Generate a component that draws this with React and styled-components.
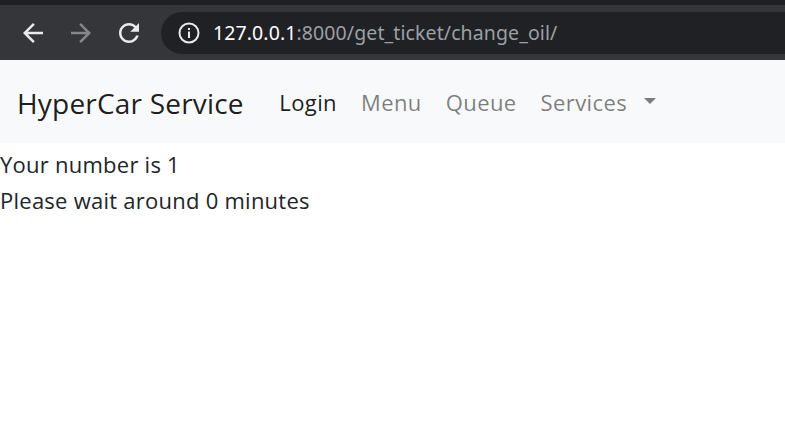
import React from "react";
import styled, { createGlobalStyle } from "styled-components";

const Global = createGlobalStyle`
  html, body { margin: 0; padding: 0; background: #fff; }
  body { font-family: "Open Sans", "Noto Sans", sans-serif; color: #212529; }
`;

const TopStrip = styled.div`
  height: 5px;
  background: #202124;
`;

const Toolbar = styled.div`
  height: 55px;
  background: #35363a;
  display: flex;
  align-items: center;
  padding-left: 18px;
  box-sizing: border-box;
  overflow: hidden;
`;

const IconButton = styled.div`
  width: 30px;
  height: 30px;
  display: flex;
  align-items: center;
  justify-content: center;
  margin-right: ${(p) => p.$gap ?? 18}px;
  color: ${(p) => (p.$disabled ? "#85878b" : "#e8eaed")};
  svg { display: block; }
`;

const Omnibox = styled.div`
  flex: 1;
  height: 42px;
  margin-right: -40px;
  background: #202124;
  border-radius: 21px;
  display: flex;
  align-items: center;
  padding-left: 16px;
  box-sizing: border-box;
`;

const InfoIcon = styled.div`
  width: 24px;
  height: 24px;
  color: #e8eaed;
  margin-right: 12px;
  svg { display: block; }
`;

const Url = styled.div`
  font-family: "Noto Sans", "Open Sans", sans-serif;
  font-size: 19.5px;
  letter-spacing: 0.1px;
  color: #9aa0a6;
  white-space: nowrap;
`;

const Host = styled.span`
  color: #ffffff;
`;

const Navbar = styled.nav`
  background: #f8f9fa;
  display: flex;
  align-items: center;
  padding: 1px 17px 0;
  height: 83px;
  box-sizing: border-box;
`;

const Brand = styled.a`
  font-size: 28px;
  line-height: 38px;
  color: rgba(0, 0, 0, 0.9);
  margin-right: 23.5px;
  margin-top: 1px;
  text-decoration: none;
  letter-spacing: 0.2px;
`;

const NavList = styled.div`
  display: flex;
  align-items: center;
`;

const NavLink = styled.a`
  font-size: 22px;
  line-height: 30px;
  padding: 0 12px;
  color: ${(p) => (p.$active ? "rgba(0,0,0,0.9)" : "rgba(0,0,0,0.5)")};
  text-decoration: none;
  letter-spacing: 0.4px;
  display: flex;
  align-items: center;
`;

const Caret = styled.span`
  display: inline-block;
  width: 0;
  height: 0;
  margin-left: 17px;
  margin-top: -2px;
  border-top: 6px solid rgba(0, 0, 0, 0.5);
  border-left: 6px solid transparent;
  border-right: 6px solid transparent;
`;

const Content = styled.main`
  padding-top: 3px;
`;

const Line = styled.div`
  font-size: 22px;
  line-height: 36px;
  color: #212529;
  letter-spacing: 0.25px;
`;

const Back = () => (
  <svg width="30" height="30" viewBox="0 0 24 24" fill="currentColor">
    <path d="M20 11H7.83l5.59-5.59L12 4l-8 8 8 8 1.41-1.41L7.83 13H20v-2z" />
  </svg>
);
const Forward = () => (
  <svg width="30" height="30" viewBox="0 0 24 24" fill="currentColor">
    <path d="M12 4l-1.41 1.41L16.17 11H4v2h12.17l-5.58 5.59L12 20l8-8z" />
  </svg>
);
const Reload = () => (
  <svg width="30" height="30" viewBox="0 0 24 24" fill="currentColor">
    <path d="M17.65 6.35C16.2 4.9 14.21 4 12 4c-4.42 0-7.99 3.58-7.99 8s3.57 8 7.99 8c3.73 0 6.84-2.55 7.73-6h-2.08c-.82 2.33-3.04 4-5.65 4-3.31 0-6-2.69-6-6s2.69-6 6-6c1.66 0 3.14.69 4.22 1.78L13 11h7V4l-2.35 2.35z" />
  </svg>
);
const Info = () => (
  <svg width="24" height="24" viewBox="0 0 24 24" fill="none">
    <circle cx="12" cy="12" r="9.5" stroke="currentColor" strokeWidth="2" />
    <rect x="11" y="10.5" width="2" height="6.5" fill="currentColor" />
    <rect x="11" y="7" width="2" height="2" fill="currentColor" />
  </svg>
);

export default function App() {
  return (
    <>
      <Global />
      <TopStrip />
      <Toolbar>
        <IconButton><Back /></IconButton>
        <IconButton $disabled><Forward /></IconButton>
        <IconButton $gap={17}><Reload /></IconButton>
        <Omnibox>
          <InfoIcon><Info /></InfoIcon>
          <Url>
            <Host>127.0.0.1</Host>:8000/get_ticket/change_oil/
          </Url>
        </Omnibox>
      </Toolbar>
      <Navbar>
        <Brand href="#">HyperCar Service</Brand>
        <NavList>
          <NavLink $active href="#">Login</NavLink>
          <NavLink href="#">Menu</NavLink>
          <NavLink href="#">Queue</NavLink>
          <NavLink href="#">
            Services<Caret />
          </NavLink>
        </NavList>
      </Navbar>
      <Content>
        <Line>Your number is 1</Line>
        <Line>Please wait around 0 minutes</Line>
      </Content>
    </>
  );
}
